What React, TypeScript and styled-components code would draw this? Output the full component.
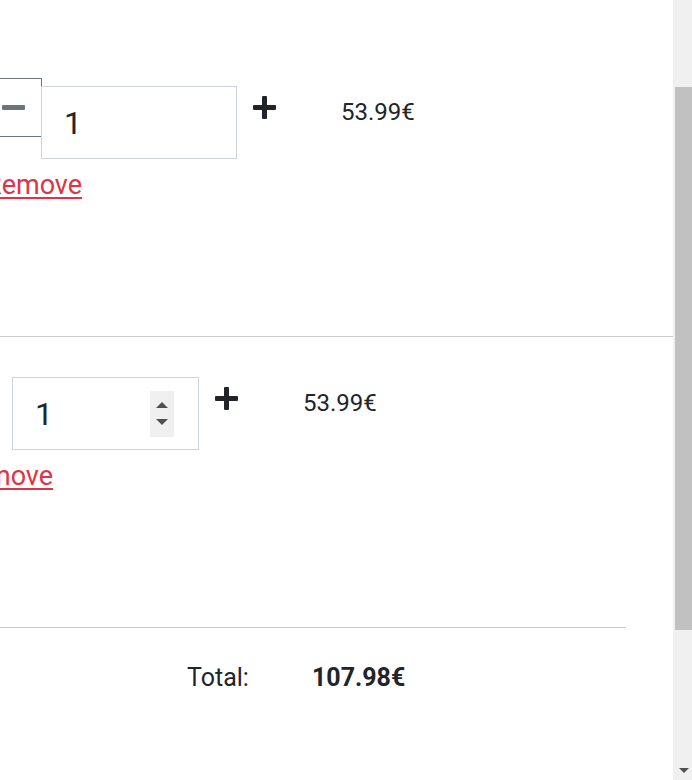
import React from "react";
import styled, { createGlobalStyle } from "styled-components";

const GlobalStyle = createGlobalStyle`
  html, body { margin: 0; padding: 0; }
  body {
    font-family: Roboto, "Liberation Sans", sans-serif;
    color: #212529;
    background: #ffffff;
    overflow: hidden;
  }
`;

const Page = styled.div`
  display: flex;
  height: 780px;
`;

const Viewport = styled.main`
  flex: 1;
  min-width: 0;
  overflow: hidden;
`;

const Cart = styled.div`
  margin-left: -300px;
  padding-top: 45px;
`;

const Row = styled.div<{ $border?: boolean; $top: number }>`
  display: flex;
  align-items: flex-start;
  padding-top: ${(p) => p.$top}px;
  box-sizing: border-box;
  border-bottom: ${(p) => (p.$border ? "1px solid #cccccc" : "none")};
  height: ${(p) => (p.$border ? "292px" : "290px")};
`;

const Lead = styled.div<{ $w: number }>`
  flex: 0 0 ${(p) => p.$w}px;
  overflow: hidden;
  font-size: 20px;
`;

const QtyCol = styled.div`
  display: flex;
  flex-direction: column;
  align-items: flex-start;
`;

const Controls = styled.div`
  display: flex;
  align-items: flex-start;
`;

const MinusButton = styled.button<{ $hidden?: boolean }>`
  visibility: ${(p) => (p.$hidden ? "hidden" : "visible")};
  width: 52px;
  height: 59px;
  margin-right: -1px;
  box-sizing: border-box;
  border: 1px solid #6c757d;
  background: #ffffff;
  display: flex;
  align-items: center;
  justify-content: flex-start;
  padding: 0 0 0 11px;
  cursor: pointer;
`;

const MinusBar = styled.span`
  display: block;
  width: 23px;
  height: 5px;
  border-radius: 1px;
  background: #6c757d;
`;

const QtyBox = styled.label<{ $w: number }>`
  display: flex;
  align-items: center;
  width: ${(p) => p.$w}px;
  height: 73px;
  margin-top: 8px;
  box-sizing: border-box;
  border: 1px solid #ced4da;
  background: #ffffff;
  padding: 0 24px 0 22px;
`;

const QtyInput = styled.input`
  flex: 1;
  min-width: 0;
  border: none;
  outline: none;
  background: transparent;
  font-family: Roboto, "Liberation Sans", sans-serif;
  font-size: 32px;
  color: #212529;
  padding: 0;
`;

const Spinner = styled.span`
  display: flex;
  flex-direction: column;
  align-items: center;
  justify-content: space-evenly;
  width: 24px;
  height: 46px;
  background: #f0f0f0;
`;

const Tri = styled.span<{ $up?: boolean }>`
  width: 0;
  height: 0;
  border-left: 6px solid transparent;
  border-right: 6px solid transparent;
  ${(p) =>
    p.$up ? "border-bottom: 6px solid #505050;" : "border-top: 6px solid #505050;"}
`;

const PlusButton = styled.button`
  height: 59px;
  padding: 0 16px;
  border: none;
  background: transparent;
  display: flex;
  align-items: center;
  cursor: pointer;
`;

const RemoveLink = styled.a`
  margin-top: 6px;
  margin-left: -5px;
  font-size: 27px;
  line-height: 1.5;
  color: #dc3545;
  text-decoration: underline;
  text-underline-offset: 3px;
  cursor: pointer;
`;

const Price = styled.div`
  margin-top: 16px;
  margin-left: 49px;
  font-size: 24px;
  line-height: 1.5;
`;

const Totals = styled.div`
  margin-right: 47px;
  border-top: 1px solid #cccccc;
  padding-top: 31px;
  display: grid;
  grid-template-columns: 487px 125px auto;
  font-size: 25px;
  line-height: 1.5;
`;

const TotalValue = styled.strong`
  font-weight: 700;
`;

const ScrollTrack = styled.div`
  flex: 0 0 19px;
  background: #f0f0f0;
  display: flex;
  flex-direction: column;
  align-items: flex-end;
  padding-top: 87px;
  box-sizing: border-box;
`;

const ScrollThumb = styled.div`
  width: 17px;
  height: 543px;
  background: #c1c1c1;
`;

const ScrollSpacer = styled.div`
  flex: 1;
`;

const ScrollArrow = styled.div`
  align-self: center;
  margin: 0 0 7px 2px;
  width: 0;
  height: 0;
  border-left: 5px solid transparent;
  border-right: 5px solid transparent;
  border-top: 5px solid #505050;
`;

const PlusIcon = () => (
  <svg width="23" height="23" viewBox="0 0 23 23" aria-hidden="true">
    <rect x="9" y="0" width="5" height="23" rx="1" fill="#212529" />
    <rect x="0" y="9" width="23" height="5" rx="1" fill="#212529" />
  </svg>
);

type Item = {
  name: string;
  lead: number;
  box: number;
  top: number;
  spinner?: boolean;
  hideMinus?: boolean;
  price: string;
  border?: boolean;
};

const items: Item[] = [
  { name: "Product A", lead: 290, box: 196, top: 33, price: "53.99€", border: true },
  { name: "Product B", lead: 261, box: 187, top: 32, spinner: true, hideMinus: true, price: "53.99€" },
];

export default function App() {
  return (
    <>
      <GlobalStyle />
      <Page>
        <Viewport>
          <Cart>
            {items.map((it) => (
              <Row key={it.name} $border={it.border} $top={it.top}>
                <Lead $w={it.lead}>{it.name}</Lead>
                <QtyCol>
                  <Controls>
                    <MinusButton $hidden={it.hideMinus} aria-label="Decrease">
                      <MinusBar />
                    </MinusButton>
                    <QtyBox $w={it.box}>
                      <QtyInput type="text" defaultValue="1" />
                      {it.spinner && (
                        <Spinner>
                          <Tri $up />
                          <Tri />
                        </Spinner>
                      )}
                    </QtyBox>
                    <PlusButton aria-label="Increase">
                      <PlusIcon />
                    </PlusButton>
                  </Controls>
                  <RemoveLink>Remove</RemoveLink>
                </QtyCol>
                <Price>{it.price}</Price>
              </Row>
            ))}
            <Totals>
              <span />
              <span>Total:</span>
              <TotalValue>107.98€</TotalValue>
            </Totals>
          </Cart>
        </Viewport>
        <ScrollTrack aria-hidden="true">
          <ScrollThumb />
          <ScrollSpacer />
          <ScrollArrow />
        </ScrollTrack>
      </Page>
    </>
  );
}
